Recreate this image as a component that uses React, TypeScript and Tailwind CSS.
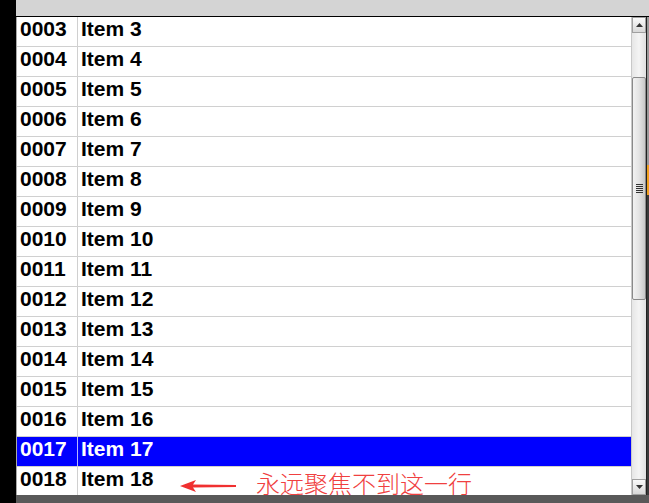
import React from 'react';

const rows = Array.from({ length: 16 }, (_, i) => i + 3);

const ScrollBar = () => (
  <div className="w-[15px] flex flex-col bg-gradient-to-r from-[#e6e6e6] via-[#f4f4f4] to-[#e0e0e0] border-l border-[#c8c8c8]">
    <div className="h-[16px] flex items-center justify-center border border-[#a0a0a0] bg-gradient-to-b from-[#fafafa] to-[#d8d8d8]">
      <svg width="7" height="4" viewBox="0 0 7 4">
        <polygon points="3.5,0 7,4 0,4" fill="#333" />
      </svg>
    </div>
    <div className="h-[44px]" />
    <div className="h-[223px] border border-[#8a8a8a] rounded-[2px] bg-gradient-to-r from-[#f2f2f2] via-[#e4e4e4] to-[#c8c8c8] flex items-center justify-center">
      <div className="flex flex-col gap-[1px]">
        {[0, 1, 2, 3, 4].map((k) => (
          <div key={k} className="w-[7px] h-[1px] bg-[#333]" />
        ))}
      </div>
    </div>
    <div className="flex-1" />
    <div className="h-[16px] flex items-center justify-center border border-[#a0a0a0] bg-gradient-to-b from-[#fafafa] to-[#d8d8d8]">
      <svg width="7" height="4" viewBox="0 0 7 4">
        <polygon points="0,0 7,0 3.5,4" fill="#333" />
      </svg>
    </div>
  </div>
);

const App = () => {
  return (
    <div
      className="w-[649px] h-[503px] flex bg-black overflow-hidden"
      style={{ fontFamily: '"Liberation Sans", Arial, sans-serif' }}
    >
      <div className="w-[16px] bg-black" />
      <div className="flex-1 flex flex-col">
        <div className="h-[16px] bg-[#d4d4d4]" />
        <div className="flex h-[479px] border-t border-black">
          <div className="relative flex-1 border-l border-[#a8a8a8] bg-white overflow-hidden">
            {rows.map((n) => {
              const sel = n === 17;
              return (
                <div
                  key={n}
                  className={`flex h-[30px] border-b border-[#d0d0d0] text-[21px] font-bold ${sel ? 'bg-[#0000ff] text-white' : 'bg-white text-black'}`}
                >
                  <div className={`w-[61px] pl-[3px] leading-[24px] border-r ${sel ? 'border-[#b8b8ff]' : 'border-[#d0d0d0]'}`}>
                    {String(n).padStart(4, '0')}
                  </div>
                  <div className="flex-1 pl-[3px] leading-[24px]">Item {n}</div>
                </div>
              );
            })}
            {/* annotation */}
            <div className="absolute left-[163px] top-[454px] flex items-center gap-[20px]">
              <svg width="56" height="12" viewBox="0 0 56 12" className="mt-[6px]">
                <polygon points="0,6 16,0 13,4.5 56,5 56,7 13,7.5 16,12" fill="#f03030" />
              </svg>
              <span
                className="text-[24px] text-[#f04040] leading-none"
                style={{ fontFamily: '"Noto Sans CJK SC", sans-serif', fontWeight: 300 }}
              >
                永远聚焦不到这一行
              </span>
            </div>
          </div>
          <ScrollBar />
          <div className="w-[1px] bg-[#202020]" />
          <div className="w-[2px] flex flex-col bg-[#3a3a3a]">
            <div className="h-[148px] bg-[#9a9a9a]" />
            <div className="h-[30px] bg-[#f0a020]" />
            <div className="flex-1" />
          </div>
        </div>
        <div className="flex-1 bg-[#595959]" />
      </div>
    </div>
  );
};

export default App;
